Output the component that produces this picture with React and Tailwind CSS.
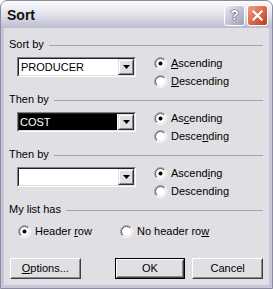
const font = { fontFamily: "'Liberation Sans', Arial, sans-serif" };

const Radio = ({ checked }) => (
  <svg width="13" height="13" viewBox="0 0 13 13" className="shrink-0">
    <defs>
      <linearGradient id="rOuter" x1="0" y1="0" x2="1" y2="1">
        <stop offset="0.45" stopColor="#9a9aa0" />
        <stop offset="0.55" stopColor="#ffffff" />
      </linearGradient>
      <linearGradient id="rInner" x1="0" y1="0" x2="1" y2="1">
        <stop offset="0.45" stopColor="#505050" />
        <stop offset="0.55" stopColor="#dcdce0" />
      </linearGradient>
    </defs>
    <circle cx="6.5" cy="6.5" r="6" fill="#fff" stroke="url(#rOuter)" strokeWidth="1" />
    <circle cx="6.5" cy="6.5" r="5" fill="#fff" stroke="url(#rInner)" strokeWidth="1" />
    {checked && <circle cx="6.5" cy="6.5" r="2" fill="#000" />}
  </svg>
);

const RadioRow = ({ checked, children }) => (
  <div className="h-[18px] flex items-center gap-[4px]">
    <Radio checked={checked} />
    <span className="leading-none">{children}</span>
  </div>
);

const GroupLabel = ({ children }) => (
  <div className="h-[14px] flex items-center">
    <span className="leading-none pr-[5px]">{children}</span>
    <div className="flex-1 h-px bg-[#a3a3ad] mt-[2px]" />
  </div>
);

const Combo = ({ value, selected }) => (
  <div className="w-[119px] h-[20px] border border-t-[#7f7f86] border-l-[#7f7f86] border-b-white border-r-white">
    <div className="h-full flex border border-t-[#202020] border-l-[#202020] border-b-[#dcdce0] border-r-[#dcdce0] bg-white">
      <div className="flex-1 flex items-center pr-[1px]">
        <span
          className={
            selected
              ? 'h-full w-full flex items-center bg-black text-white pl-[1px] leading-none'
              : 'pl-[2px] leading-none'
          }
        >
          {value}
        </span>
      </div>
      <div className="w-[16px] h-full border border-t-[#e0dfe3] border-l-[#e0dfe3] border-b-[#303030] border-r-[#303030]">
        <div className="h-full flex items-center justify-center bg-[#e0dfe3] border border-t-white border-l-white border-b-[#85858c] border-r-[#85858c]">
          <svg width="7" height="4" viewBox="0 0 7 4">
            <path d="M0 0h7L3.5 4z" fill="#000" />
          </svg>
        </div>
      </div>
    </div>
  </div>
);

const SortGroup = ({ label, value, selected, asc, desc }) => (
  <div className="flex flex-col">
    <GroupLabel>{label}</GroupLabel>
    <div className="flex mt-[3px]">
      <div className="ml-[8px] mt-[3px]">
        <Combo value={value} selected={selected} />
      </div>
      <div className="ml-[18px] flex flex-col">
        <RadioRow checked>{asc}</RadioRow>
        <RadioRow>{desc}</RadioRow>
      </div>
    </div>
  </div>
);

const Button = ({ children, isDefault, className = '' }) => (
  <div className={`w-[71px] h-[21px] ${isDefault ? 'border border-black' : ''} ${className}`}>
    <div className="h-full border border-t-white border-l-white border-b-[#404040] border-r-[#404040]">
      <div className="h-full flex items-center justify-center bg-[#e0dfe3] border border-t-[#e0dfe3] border-l-[#e0dfe3] border-b-[#8a8a92] border-r-[#8a8a92] leading-none">
        {children}
      </div>
    </div>
  </div>
);

export default function App() {
  return (
    <div className="w-[273px] h-[289px] text-[11px] text-black" style={font}>
      <div className="h-full flex flex-col rounded-t-[7px] border border-[#8b8ba0] bg-[#c6c6d6] overflow-hidden">
        {/* Title bar */}
        <div className="h-[27px] shrink-0 flex items-center pl-[6px] pr-[4px] bg-gradient-to-b from-[#fbfbfd] via-[#e2e2ea] to-[#bcbccf]">
          <span className="text-[14px] font-bold leading-none text-[#111] mt-[1px]">Sort</span>
          <div className="ml-auto flex gap-[2px] mt-[1px]">
            <div className="w-[21px] h-[21px] rounded-[3px] border border-white bg-gradient-to-br from-[#ebebf3] via-[#c4c4d6] to-[#9c9cb6] flex items-center justify-center">
              <span className="text-[14px] font-bold leading-none text-white [text-shadow:0_0_1px_#3a3a55,0_0_1px_#3a3a55,0_0_1px_#3a3a55]">?</span>
            </div>
            <div className="w-[21px] h-[21px] rounded-[3px] border border-white bg-gradient-to-br from-[#f0a088] via-[#dc6a4c] to-[#bc3a22] flex items-center justify-center">
              <svg width="11" height="11" viewBox="0 0 11 11">
                <path d="M1.5 1.5l8 8M9.5 1.5l-8 8" stroke="#fff" strokeWidth="2.2" strokeLinecap="square" />
              </svg>
            </div>
          </div>
        </div>

        {/* Body */}
        <div className="flex-1 mx-[3px] mb-[3px] bg-[#e0dfe3] pl-[5px] pr-[6px] pt-[9px] flex flex-col">
          <div className="flex flex-col gap-[2px]">
            <SortGroup
              label="Sort by"
              value="PRODUCER"
              asc={<><u>A</u>scending</>}
              desc={<><u>D</u>escending</>}
            />
            <SortGroup
              label="Then by"
              value="COST"
              selected
              asc={<>As<u>c</u>ending</>}
              desc={<>Desce<u>n</u>ding</>}
            />
            <SortGroup
              label="Then by"
              value=""
              asc={<>Ascend<u>i</u>ng</>}
              desc={<>Descendin<u>g</u></>}
            />
          </div>

          <div className="mt-[2px]">
            <GroupLabel>My list has</GroupLabel>
          </div>
          <div className="flex mt-[6px] ml-[9px]">
            <div className="w-[102px]">
              <RadioRow checked>Header <u>r</u>ow</RadioRow>
            </div>
            <RadioRow>No header ro<u>w</u></RadioRow>
          </div>

          <div className="flex mt-[18px]">
            <Button className="ml-[1px]"><u>O</u>ptions...</Button>
            <Button isDefault className="ml-[34px]">OK</Button>
            <Button className="ml-[7px]">Cancel</Button>
          </div>
        </div>
      </div>
    </div>
  );
}
